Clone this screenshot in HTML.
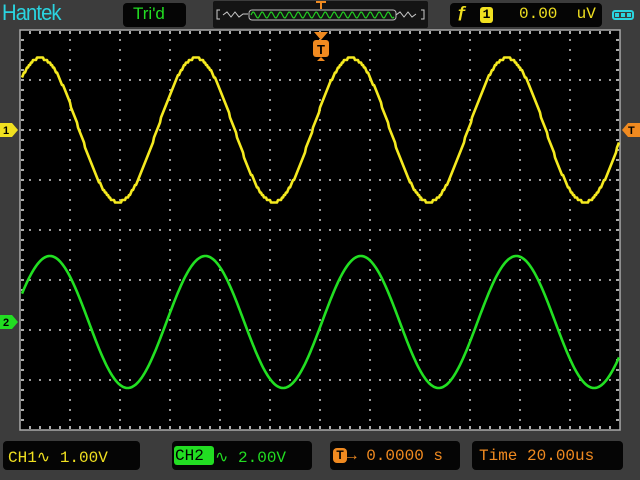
<!DOCTYPE html>
<html><head><style>
body{margin:0;width:640px;height:480px;background:#3c3c3c;overflow:hidden;position:relative;font-family:"Liberation Mono",monospace}
.box{position:absolute;background:#050505;border-radius:4px}
.t{position:absolute;white-space:pre}
</style></head><body>
<div class="t" style="left:2px;top:0px;font-family:'Liberation Sans',sans-serif;font-size:22px;color:#2ad4e0;letter-spacing:-1px;transform:scaleX(0.92);transform-origin:left">Hantek</div>
<div class="box" style="left:123px;top:3px;width:63px;height:24px"></div>
<div class="t" style="left:133px;top:4px;font-family:'Liberation Sans',sans-serif;font-size:17px;color:#22dd22">Tri'd</div>
<div class="box" style="left:213px;top:1px;width:215px;height:27px;background:#141414;border-radius:2px"></div>
<div class="box" style="left:450px;top:3px;width:152px;height:24px"></div>
<div class="t" style="left:457px;top:4px;font-size:17px;color:#f0e020;font-weight:bold">ƒ</div>
<div style="position:absolute;left:480px;top:7px;width:13px;height:16px;background:#f0e020;border-radius:3px;color:#000;font-size:13px;text-align:center;line-height:16px;font-weight:bold">1</div>
<div class="t" style="left:519px;top:5px;font-size:16px;color:#f0e020">0.00  uV</div>
<div style="position:absolute;left:612px;top:10px;width:22px;height:10px;border:2px solid #2ad4e0;border-radius:3px;box-sizing:border-box"></div>
<div style="position:absolute;left:615px;top:13px;width:16px;height:4px;background:repeating-linear-gradient(90deg,#2ad4e0 0 4px,transparent 4px 6px)"></div>

<svg style="position:absolute;left:0;top:0" width="640" height="480">
<rect x="20" y="30" width="600" height="400" fill="#000"/>
<g id="grid"></g>
<rect x="20" y="30" width="600" height="400" fill="none" stroke="#aaa" stroke-width="1.5"/>
<path d="M220 10h-3v9h3 M421 10h3v9h-3" stroke="#ccc" fill="none"/>
<path d="M223 15 l4-3 4 5 4-5 4 5 4-3 5 0" stroke="#ccc" fill="none"/>
<path d="M396 15 l4-3 4 5 4-5 4 5 4-3" stroke="#ccc" fill="none"/>
<rect x="249" y="10" width="147" height="10" rx="3" fill="none" stroke="#bbb"/>
<path id="ov" stroke="#22cc22" fill="none" stroke-width="1.2"/>
<path d="M316 2h10 M321 2v7" stroke="#f08a20" stroke-width="2"/>
<path d="M314 32h14l-7 8z" fill="#f08a20"/>
<rect x="313" y="40" width="16" height="17" rx="3" fill="#f08a20"/>
<path d="M321 57l-4 4h8z" fill="#f08a20"/>
<text x="321" y="54" font-size="13" font-weight="bold" fill="#000" text-anchor="middle" font-family="Liberation Sans">T</text>
<path d="M0 123h12l6 7-6 7h-12z" fill="#f0e020"/>
<text x="3" y="134" font-size="11" font-weight="bold" fill="#000" font-family="Liberation Sans">1</text>
<path d="M0 315h12l6 7-6 7h-12z" fill="#22dd22"/>
<text x="3" y="326" font-size="11" font-weight="bold" fill="#000" font-family="Liberation Sans">2</text>
<path d="M640 123h-12l-6 7 6 7h12z" fill="#f08a20"/>
<text x="628" y="134" font-size="11" font-weight="bold" fill="#000" font-family="Liberation Sans">T</text>
<path id="y1" stroke="#f5ea20" stroke-width="2.6" fill="none" stroke-linejoin="round"/>
<path id="g1" stroke="#22e022" stroke-width="2.6" fill="none" stroke-linejoin="round"/>
</svg>

<div class="box" style="left:3px;top:441px;width:137px;height:29px"></div>
<div class="t" style="left:8px;top:447px;font-size:16px;color:#f0e020">CH1∿ 1.00V</div>
<div class="box" style="left:172px;top:441px;width:140px;height:29px"></div>
<div style="position:absolute;left:174px;top:446px;width:40px;height:19px;background:#22dd22;border-radius:3px"></div>
<div class="t" style="left:175px;top:447px;font-size:16px;color:#000">CH2</div>
<div class="t" style="left:215px;top:447px;font-size:16px;color:#22dd22">∿ 2.00V</div>
<div class="box" style="left:330px;top:441px;width:130px;height:29px"></div>
<div style="position:absolute;left:333px;top:448px;width:14px;height:15px;background:#f08a20;border-radius:4px;color:#000;font-size:12px;font-weight:bold;text-align:center;line-height:15px;font-family:'Liberation Sans'">T</div>
<div class="t" style="left:347px;top:447px;font-size:16px;color:#f08a20">→ 0.0000 s</div>
<div class="box" style="left:472px;top:441px;width:151px;height:29px"></div>
<div class="t" style="left:479px;top:447px;font-size:16px;color:#f08a20">Time 20.00us</div>

<script>
var g='';
for(var x=70;x<620;x+=50)for(var y=40;y<430;y+=10)g+='<rect x="'+(x-1)+'" y="'+(y-1)+'" width="2" height="2" fill="#999"/>';
for(var y=80;y<430;y+=50)for(var x=30;x<620;x+=10)g+='<rect x="'+(x-1)+'" y="'+(y-1)+'" width="2" height="2" fill="#999"/>';
for(var x=30;x<620;x+=10){g+='<rect x="'+(x-1)+'" y="31" width="2" height="3" fill="#aaa"/><rect x="'+(x-1)+'" y="426" width="2" height="3" fill="#aaa"/>';}
for(var y=40;y<430;y+=10){g+='<rect x="21" y="'+(y-1)+'" width="3" height="2" fill="#aaa"/><rect x="616" y="'+(y-1)+'" width="3" height="2" fill="#aaa"/>';}
document.getElementById('grid').innerHTML=g;
var P=155.5,d='',e='',o='';
for(var x=22;x<=619;x+=1){
 var y=130-72*Math.sin(2*Math.PI*(x-1.5)/P);
 y=Math.round(y/2.5)*2.5;
 d+=(x==22?'M':'L')+x+' '+y;
 var z=322-66*Math.sin(2*Math.PI*(x-11)/P);
 e+=(x==22?'M':'L')+x+' '+z.toFixed(1);
}
for(var x=251;x<=394;x++){o+=(x==251?'M':'L')+x+' '+(15-3*Math.sin(2*Math.PI*(x-251)/9)).toFixed(1);}
document.getElementById('y1').setAttribute('d',d);
document.getElementById('g1').setAttribute('d',e);
document.getElementById('ov').setAttribute('d',o);
</script>
</body></html>
